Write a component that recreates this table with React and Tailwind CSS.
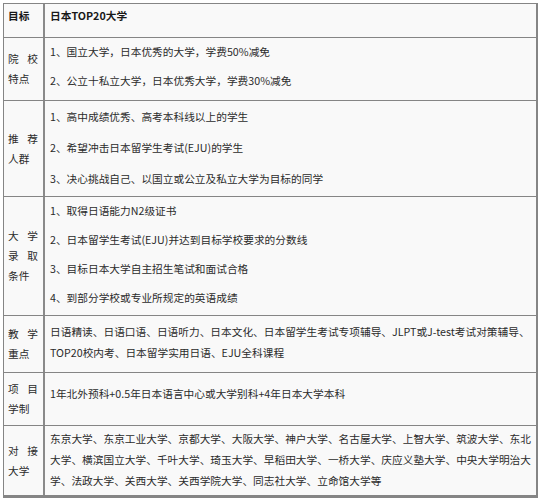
import React from 'react';

const FONT = { fontFamily: '"Noto Sans CJK SC", "Noto Sans", sans-serif' };

// label lines: every line but the last is spread across the cell
const rows = [
  {
    label: ['院校', '特点'],
    pad: 'pt-[3px] pb-[9px]',
    gap: 'gap-[8px]',
    paras: [['1、国立大学，日本优秀的大学，学费50%减免'], ['2、公立十私立大学，日本优秀大学，学费30%减免']],
  },
  {
    label: ['推荐', '人群'],
    pad: 'pt-[5px] pb-[7px]',
    gap: 'gap-[10px]',
    paras: [
      ['1、高中成绩优秀、高考本科线以上的学生'],
      ['2、希望冲击日本留学生考试(EJU)的学生'],
      ['3、决心挑战自己、以国立或公立及私立大学为目标的同学'],
    ],
  },
  {
    label: ['大学', '录取', '条件'],
    pad: 'pt-[3px] pb-[7px]',
    gap: 'gap-[8px]',
    paras: [
      ['1、取得日语能力N2级证书'],
      ['2、日本留学生考试(EJU)并达到目标学校要求的分数线'],
      ['3、目标日本大学自主招生笔试和面试合格'],
      ['4、到部分学校或专业所规定的英语成绩'],
    ],
  },
  {
    label: ['教学', '重点'],
    pad: 'pt-[5px] pb-[9px]',
    gap: 'gap-0',
    paras: [
      [
        '日语精读、日语口语、日语听力、日本文化、日本留学生考试专项辅导、JLPT或J-test考试对策辅导、',
        'TOP20校内考、日本留学实用日语、EJU全科课程',
      ],
    ],
  },
  {
    label: ['项目', '学制'],
    pad: 'pt-[10px] pb-[21px]',
    gap: 'gap-0',
    paras: [['1年北外预科+0.5年日本语言中心或大学别科+4年日本大学本科']],
  },
  {
    label: ['对接', '大学'],
    pad: 'pt-[2px] pb-[4px]',
    gap: 'gap-0',
    paras: [
      [
        '东京大学、东京工业大学、京都大学、大阪大学、神户大学、名古屋大学、上智大学、筑波大学、东北',
        '大学、横滨国立大学、千叶大学、琦玉大学、早稻田大学、一桥大学、庆应义塾大学、中央大学明治大',
        '学、法政大学、关西大学、关西学院大学、同志社大学、立命馆大学等',
      ],
    ],
  },
];

function Label({ lines }) {
  return (
    <div className="w-[30px] leading-[20px]">
      {lines.map((l, i) =>
        i < lines.length - 1 ? (
          <div key={i} className="flex justify-between">
            {l.split('').map((c, j) => (
              <span key={j}>{c}</span>
            ))}
          </div>
        ) : (
          <div key={i} className="whitespace-nowrap">{l}</div>
        )
      )}
    </div>
  );
}

export default function App() {
  return (
    <div className="w-[539px] h-[500px] bg-white pt-[3px] pl-[3px]" style={FONT}>
      <div className="w-[535px] border-t border-l border-r-2 border-b-[3px] border-[#858585] bg-[#f9f9f9] text-[10.7px] text-[#2b2b2b]">
        {/* header */}
        <div className="flex border-b border-[#858585]">
          <div className="w-[41px] shrink-0 border-r-2 border-[#8a8a8a] pl-[4px] pt-[1px] pb-[11px] leading-[21px] font-bold text-[#181818]">
            目标
          </div>
          <div className="flex-1 pl-[5px] pt-[1px] pb-[11px] leading-[21px] font-bold text-[#181818]">
            日本TOP20大学
          </div>
        </div>

        {rows.map((r, i) => (
          <div key={i} className={`flex ${i < rows.length - 1 ? 'border-b border-[#858585]' : ''}`}>
            <div className="w-[41px] shrink-0 border-r-2 border-[#8a8a8a] pl-[4px] flex items-center">
              <Label lines={r.label} />
            </div>
            <div className={`flex-1 pl-[5px] flex flex-col leading-[21px] ${r.pad} ${r.gap}`}>
              {r.paras.map((p, j) => (
                <div key={j}>
                  {p.map((line, k) => (
                    <div key={k} className="whitespace-nowrap">{line}</div>
                  ))}
                </div>
              ))}
            </div>
          </div>
        ))}
      </div>
    </div>
  );
}
